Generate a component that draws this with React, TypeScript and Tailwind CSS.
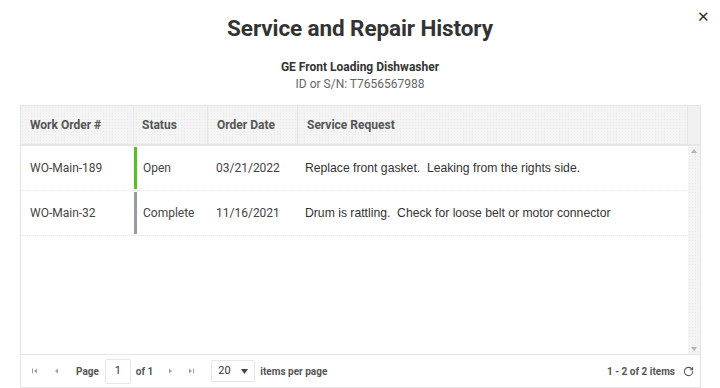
import { RotateCw } from "lucide-react"

const rows = [
  {
    id: "WO-Main-189",
    status: "Open",
    bar: "bg-[#52c41a]",
    date: "03/21/2022",
    request: "Replace front gasket.  Leaking from the rights side.",
  },
  {
    id: "WO-Main-32",
    status: "Complete",
    bar: "bg-[#9a9ca3]",
    date: "11/16/2021",
    request: "Drum is rattling.  Check for loose belt or motor connector",
  },
]

const dots =
  "bg-[#f4f4f4] bg-[radial-gradient(#e9e9e9_0.6px,transparent_0.6px)] bg-[length:3px_3px]"

function PagerArrow({ dir, bar }: { dir: "left" | "right"; bar?: boolean }) {
  return (
    <svg width="8" height="8" viewBox="0 0 8 8" className="text-[#a0a0a0]">
      {dir === "left" ? (
        <>
          {bar && <rect x="1" y="1.5" width="1" height="5" fill="currentColor" />}
          <polygon points="6,1.5 6,6.5 3,4" fill="currentColor" />
        </>
      ) : (
        <>
          <polygon points="2,1.5 2,6.5 5,4" fill="currentColor" />
          {bar && <rect x="6" y="1.5" width="1" height="5" fill="currentColor" />}
        </>
      )}
    </svg>
  )
}

export default function App() {
  return (
    <div className="w-[720px] h-[388px] bg-white relative overflow-hidden font-['Roboto',sans-serif] text-[#333]">
      <button className="absolute right-[10px] top-[9px] text-[15px] leading-none text-[#333] font-['Liberation_Sans',sans-serif]">
        ✕
      </button>

      <div className="flex flex-col items-center pt-[14px]">
        <h1 className="text-[22.5px] font-bold leading-[28px] tracking-[-0.1px] text-[#333]">
          Service and Repair History
        </h1>
        <div className="mt-[18px] text-[12px] font-bold leading-[15px] text-[#333]">
          GE Front Loading Dishwasher
        </div>
        <div className="mt-[2px] text-[12px] leading-[15px] text-[#666]">ID or S/N: T7656567988</div>
      </div>

      <div className="mx-[20px] mt-[13px] w-[681px] h-[283px] border border-[#e3e3e3] flex flex-col">
        {/* header */}
        <div className={`flex h-[40px] border-b-2 border-[#e6e6e6] ${dots}`}>
          <div className="w-[113px] flex items-center pl-[9px] text-[12px] font-bold text-[#555] border-r border-[#e6e6e6]">
            Work Order #
          </div>
          <div className="w-[74px] flex items-center pl-[8px] text-[12px] font-bold text-[#555] border-r border-[#e6e6e6]">
            Status
          </div>
          <div className="w-[90px] flex items-center pl-[9px] text-[12px] font-bold text-[#555] border-r border-[#e6e6e6]">
            Order Date
          </div>
          <div className="flex-1 flex items-center pl-[9px] text-[12px] font-bold text-[#555]">
            Service Request
          </div>
          <div className="w-[13px] border-l border-[#e6e6e6] bg-[#f0f0f0]" />
        </div>

        {/* body */}
        <div className="flex flex-1 min-h-0">
          <div className="flex-1 flex flex-col">
            {rows.map((r) => (
              <div key={r.id} className="flex h-[45px] border-b border-dotted border-[#e6e6e6] text-[12px] text-[#444]">
                <div className="w-[113px] flex items-center pl-[9px]">{r.id}</div>
                <div className="w-[74px] flex items-center">
                  <div className={`w-[3px] self-stretch my-[1px] ${r.bar}`} />
                  <span className="pl-[6px]">{r.status}</span>
                </div>
                <div className="w-[90px] flex items-center pl-[8px]">{r.date}</div>
                <div className="flex-1 flex items-center pl-[7px] whitespace-pre font-['Liberation_Sans',sans-serif] text-[12.2px] text-[#333]">
                  {r.request}
                </div>
              </div>
            ))}
          </div>
          <div className={`w-[12px] flex flex-col justify-between items-center py-[3px] ${dots}`}>
            <svg width="6" height="4" viewBox="0 0 6 4">
              <polygon points="0,4 6,4 3,0" fill="#b5b5b5" />
            </svg>
            <svg width="6" height="4" viewBox="0 0 6 4">
              <polygon points="0,0 6,0 3,4" fill="#b5b5b5" />
            </svg>
          </div>
        </div>

        {/* footer */}
        <div className="h-[33px] border-t border-[#e6e6e6] flex items-center text-[10px] font-bold text-[#555]">
          <div className="flex items-center pl-[4px]">
            <span className="w-[20px] flex justify-center">
              <PagerArrow dir="left" bar />
            </span>
            <span className="w-[20px] flex justify-center ml-[1px]">
              <PagerArrow dir="left" />
            </span>
            <span className="ml-[10px]">Page</span>
            <span className="ml-[6px] w-[26px] h-[25px] border border-[#e6e6e6] rounded-[2px] flex items-center justify-center font-normal text-[#333] text-[11px]">
              1
            </span>
            <span className="ml-[5px]">of 1</span>
            <span className="w-[20px] flex justify-center ml-[8px]">
              <PagerArrow dir="right" />
            </span>
            <span className="w-[20px] flex justify-center">
              <PagerArrow dir="right" bar />
            </span>
            <span className="ml-[10px] w-[44px] h-[22px] border border-[#e6e6e6] rounded-[2px] flex items-center justify-between px-[6px] font-normal text-[11px] text-[#333]">
              20
              <svg width="7" height="5" viewBox="0 0 7 5">
                <polygon points="0,0 7,0 3.5,5" fill="#444" />
              </svg>
            </span>
            <span className="ml-[5px]">items per page</span>
          </div>
          <div className="ml-auto flex items-center pr-[6px]">
            <span>1 - 2 of 2 items</span>
            <RotateCw size={11} strokeWidth={2.2} className="ml-[8px] text-[#555]" />
          </div>
        </div>
      </div>
    </div>
  )
}
